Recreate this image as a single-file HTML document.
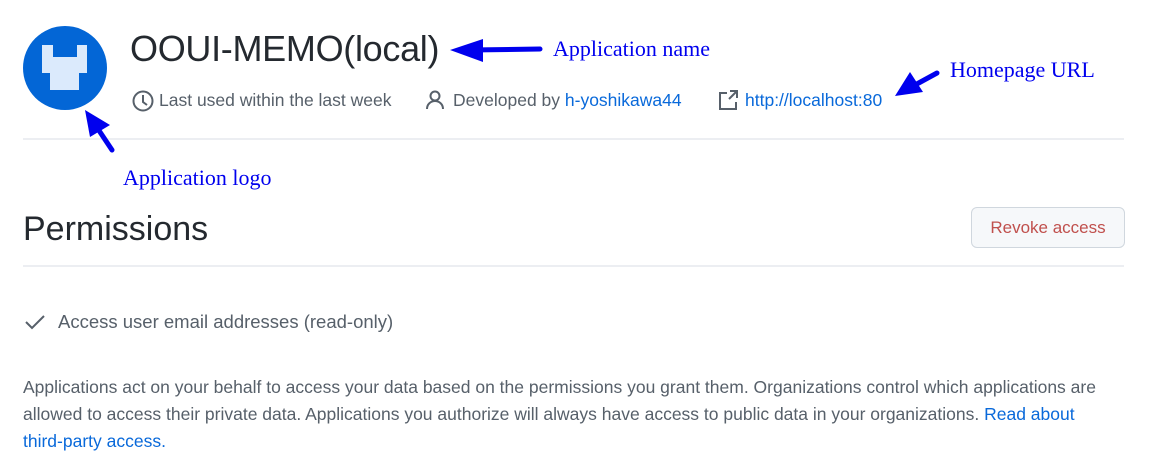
<!DOCTYPE html>
<html><head><meta charset="utf-8"><style>
body{margin:0;width:1176px;height:474px;background:#fff;position:relative;overflow:hidden;font-family:"Liberation Sans",sans-serif;color:#24292f}
.a{position:absolute;white-space:nowrap}
.meta{font-size:17.5px;color:#57606a;top:90px}
a{color:#0969da;text-decoration:none}
.ann{font-family:"Liberation Serif",serif;color:#0000ee;font-size:22px}
</style></head><body>
<svg class="a" style="left:0;top:0" width="1176" height="474">
<circle cx="65" cy="68" r="42" fill="#0366d6"/>
<path d="M42 45h11v12h24v-12h10v28h-8v17h-29v-17h-8z" fill="#dbeafc"/>
<line x1="23" y1="139" x2="1124" y2="139" stroke="#d8dee4"/>
<line x1="23" y1="266" x2="1124" y2="266" stroke="#d8dee4"/>
<g fill="#0000ee" stroke="#0000ee">
<line x1="540" y1="49" x2="470" y2="50" stroke-width="5" stroke-linecap="round"/>
<polygon points="450,50 483,39 483,62" stroke="none"/>
<line x1="112" y1="150" x2="98" y2="129" stroke-width="5" stroke-linecap="round"/>
<polygon points="85,110 110,125 90,137" stroke="none"/>
<line x1="937" y1="73" x2="915" y2="85" stroke-width="5" stroke-linecap="round"/>
<polygon points="895,96 910,72 923,92" stroke="none"/>
</g>
<circle cx="143" cy="101" r="9.5" fill="none" stroke="#57606a" stroke-width="2"/>
<path d="M143 95v7l4 3" fill="none" stroke="#57606a" stroke-width="2"/>
<circle cx="435" cy="96" r="4.5" fill="none" stroke="#57606a" stroke-width="2"/>
<path d="M427 109c0-5 4-8 8-8s8 3 8 8" fill="none" stroke="#57606a" stroke-width="2"/>
<path d="M727 93h-7v16h16v-7" fill="none" stroke="#57606a" stroke-width="2"/>
<path d="M730 91h7v7M737 91l-8 8" fill="none" stroke="#57606a" stroke-width="2"/>
<path d="M26 322l6 6 12-12" fill="none" stroke="#57606a" stroke-width="2"/>
</svg>
<div class="a" style="left:130px;top:28px;font-size:36px;letter-spacing:-0.3px">OOUI-MEMO(local)</div>
<div class="a ann" style="left:553px;top:36px">Application name</div>
<div class="a ann" style="left:950px;top:57px">Homepage URL</div>
<div class="a ann" style="left:123px;top:165px">Application logo</div>
<div class="a meta" style="left:159px">Last used within the last week</div>
<div class="a meta" style="left:453px">Developed by <a>h-yoshikawa44</a></div>
<div class="a meta" style="left:745px"><a>http://localhost:80</a></div>
<div class="a" style="left:23px;top:210px;font-size:34px">Permissions</div>
<div class="a" style="left:971px;top:207px;width:152px;height:39px;border:1px solid #d0d7de;border-radius:6px;background:#f6f8fa;font-size:17px;line-height:39px;text-align:center;color:#c0504d">Revoke access</div>
<div class="a" style="left:58px;top:311px;font-size:18.5px;color:#57606a">Access user email addresses (read-only)</div>
<div class="a" style="left:23px;top:374px;width:1105px;white-space:normal;font-size:17.5px;line-height:27px;color:#57606a">Applications act on your behalf to access your data based on the permissions you grant them. Organizations control which applications are allowed to access their private data. Applications you authorize will always have access to public data in your organizations. <a>Read about <span style="white-space:nowrap">third-party access.</span></a></div>
</body></html>
